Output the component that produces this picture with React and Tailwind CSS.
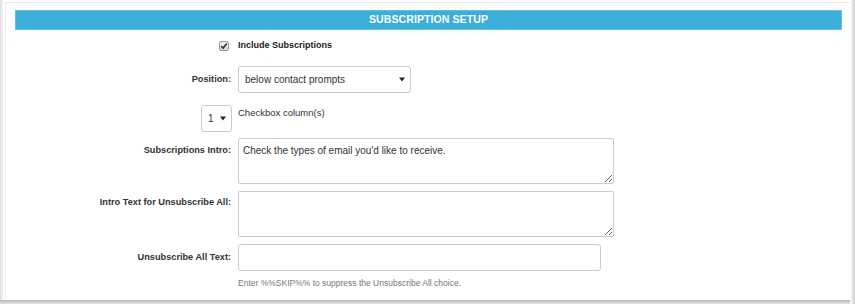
import React from "react";

function Check() {
  return (
    <span className="relative inline-flex h-[10px] w-[10px] items-center justify-center rounded-[2px] border border-[#9a9a9a] bg-gradient-to-b from-[#f4f4f4] to-[#d6d6d6]">
      <svg width="8" height="8" viewBox="0 0 8 8" className="block">
        <path d="M1.2 4.2 L3.1 6.1 L6.9 1.4" fill="none" stroke="#333" strokeWidth="1.6" />
      </svg>
    </span>
  );
}

function Arrow() {
  return (
    <svg width="6" height="5" viewBox="0 0 6 5" className="block">
      <path d="M0 0.5 L6 0.5 L3 4.5 Z" fill="#222" />
    </svg>
  );
}

function Row({ label, children, className = "", labelClass = "" }) {
  return (
    <div className={"flex " + className}>
      <div className={"w-[223px] shrink-0 pr-[7px] text-right text-[9.2px] font-bold leading-[11px] text-[#333] " + labelClass}>
        {label}
      </div>
      <div className="flex-1">{children}</div>
    </div>
  );
}

export default function App() {
  const ff = { fontFamily: '"Liberation Sans", Arial, sans-serif', resize: "both" };
  return (
    <div
      className="relative h-[304px] w-[855px] overflow-hidden bg-white"
      style={{ fontFamily: '"Liberation Sans", Arial, sans-serif' }}
    >
      <div className="absolute left-0 top-0 h-full w-[4px] bg-gradient-to-r from-[#dcdcdc] to-white" />
      <div className="absolute bottom-0 left-0 h-[4px] w-full bg-gradient-to-b from-[#b8b8b8] to-[#e4e4e4]" />
      <div className="absolute right-0 top-0 h-full w-[5px] bg-gradient-to-r from-white via-[#e6e6e6] to-[#cfcfcf]" />
      <div className="relative ml-[5px] mt-[2px] h-[298px] w-[845px] border-l border-t border-[#ececec] bg-white pl-[9px] pt-[7px]">
        <div className="flex h-[20px] w-[827px] items-center justify-center border border-[#64c1e6] bg-[#3baed9] text-[10.5px] font-bold tracking-[0.1px] text-white">
          SUBSCRIPTION SETUP
        </div>

        <Row label="" className="mt-[11px] h-[10px] items-center">
          <div className="-ml-[19px] flex items-center gap-[9px]">
            <Check />
            <span className="text-[9px] font-bold text-[#222]">Include Subscriptions</span>
          </div>
        </Row>

        <Row label="Position:" className="mt-[15px] items-center">
          <div className="flex h-[27px] w-[173px] items-center justify-between rounded-[3px] border border-[#cccccc] bg-white pl-[6px] pr-[5px]">
            <span className="text-[10px] text-[#333]">below contact prompts</span>
            <Arrow />
          </div>
        </Row>

        <div className="mt-[12px] flex">
          <div className="flex w-[223px] shrink-0 justify-end pr-[6px]">
            <div className="flex h-[27px] w-[31px] items-center justify-between rounded-[3px] border border-[#cccccc] bg-white pl-[6px] pr-[5px]">
              <span className="text-[10px] text-[#333]">1</span>
              <Arrow />
            </div>
          </div>
          <div className="pt-[2px] text-[9.5px] leading-[12px] text-[#333]">Checkbox column(s)</div>
        </div>

        <Row label="Subscriptions Intro:" className="mt-[6px] items-start" labelClass="pt-[7px]">
          <textarea
            readOnly
            defaultValue="Check the types of email you'd like to receive."
            className="block h-[46px] w-[376px] rounded-[2px] border border-[#cccccc] bg-white px-[4px] pt-[6px] text-[10px] leading-[12px] text-[#333] outline-none"
            style={ff}
          />
        </Row>

        <Row label="Intro Text for Unsubscribe All:" className="mt-[7px] items-start" labelClass="pt-[6px]">
          <textarea
            readOnly
            defaultValue=""
            className="block h-[46px] w-[376px] rounded-[2px] border border-[#cccccc] bg-white px-[4px] pt-[5px] text-[10px] text-[#333] outline-none"
            style={ff}
          />
        </Row>

        <Row label="Unsubscribe All Text:" className="mt-[7px] items-center">
          <div className="h-[27px] w-[363px] rounded-[3px] border border-[#cccccc] bg-white" />
        </Row>

        <div className="mt-[7px] pl-[223px] text-[8.5px] leading-[10px] text-[#777]">
          Enter %%SKIP%% to suppress the Unsubscribe All choice.
        </div>
      </div>
    </div>
  );
}
